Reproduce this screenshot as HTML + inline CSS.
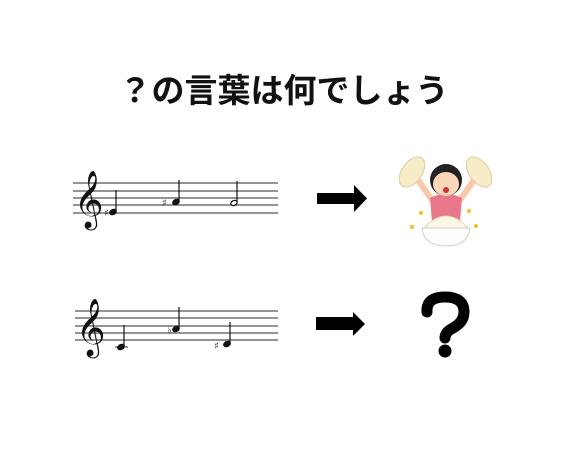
<!DOCTYPE html>
<html><head><meta charset="utf-8"><style>
html,body{margin:0;padding:0;background:#fff;width:567px;height:473px;overflow:hidden}
.t{position:absolute;left:0;top:64px;width:567px;text-align:center;font:bold 33px "Liberation Sans","Noto Sans CJK JP",sans-serif;letter-spacing:0px;color:#111}
svg{position:absolute;left:0;top:0}
</style></head><body>
<div class="t">？の言葉は何でしょう</div>
<svg width="567" height="473" viewBox="0 0 567 473">
<g stroke="#555" stroke-width="1.2">
<line x1="73" y1="183" x2="278" y2="183"/><line x1="73" y1="191" x2="278" y2="191"/><line x1="73" y1="198" x2="278" y2="198"/><line x1="73" y1="205" x2="278" y2="205"/><line x1="73" y1="213" x2="278" y2="213"/>
<line x1="75" y1="311" x2="278" y2="311"/><line x1="75" y1="318" x2="278" y2="318"/><line x1="75" y1="326" x2="278" y2="326"/><line x1="75" y1="333" x2="278" y2="333"/><line x1="75" y1="340" x2="278" y2="340"/>
<line x1="115" y1="347" x2="128" y2="347"/>
</g>
<g font-family="DejaVu Sans,sans-serif" fill="#111">
<text x="74" y="216" font-size="50">𝄞</text>
<text x="76" y="344" font-size="50">𝄞</text>
</g>
<g fill="#111" stroke="#111">
<ellipse cx="113" cy="212" rx="3.5" ry="2.6" transform="rotate(-25 113 212)"/><line x1="116" y1="211" x2="116" y2="190" stroke-width="1.2"/>
<ellipse cx="176" cy="202" rx="3.5" ry="2.6" transform="rotate(-25 176 202)"/><line x1="179" y1="201" x2="179" y2="180" stroke-width="1.2"/>
<ellipse cx="234" cy="203" rx="3.3" ry="2.4" transform="rotate(-25 234 203)" fill="#fff" stroke-width="1.2"/><line x1="237" y1="202" x2="237" y2="181" stroke-width="1.2"/>
<ellipse cx="121" cy="347" rx="3.5" ry="2.6" transform="rotate(-25 121 347)"/><line x1="124" y1="346" x2="124" y2="325" stroke-width="1.2"/>
<ellipse cx="176" cy="329" rx="3.5" ry="2.6" transform="rotate(-25 176 329)"/><line x1="179" y1="328" x2="179" y2="307" stroke-width="1.2"/>
<ellipse cx="227" cy="344" rx="3.5" ry="2.6" transform="rotate(-25 227 344)"/><line x1="230" y1="343" x2="230" y2="322" stroke-width="1.2"/>
</g>
<g font-family="DejaVu Sans,sans-serif" font-size="10" fill="#333">
<text x="104" y="216">♯</text><text x="162" y="206">♯</text><text x="167" y="333">♭</text><text x="214" y="349">♯</text>
</g>
<path d="M317 193H354V185L367 198.5L354 212V204H317Z" fill="#000"/>
<path d="M316 317H353V312L365 324L353 336V330H316Z" fill="#000"/>
<path d="M427 312Q426 297 445 297Q464 297 464 312Q464 322 453 328Q445 332 445 338" fill="none" stroke="#000" stroke-width="11" stroke-linecap="round"/>
<circle cx="445" cy="351" r="6.5" fill="#000"/>
<!-- girl -->
<g>
<ellipse cx="412" cy="172" rx="10" ry="17" transform="rotate(35 412 172)" fill="#f6edc8" stroke="#d9cfa0"/>
<ellipse cx="479" cy="172" rx="10" ry="17" transform="rotate(-35 479 172)" fill="#f6edc8" stroke="#d9cfa0"/>
<path d="M418 180L432 200" stroke="#f8c8a8" stroke-width="6"/>
<path d="M474 180L460 200" stroke="#f8c8a8" stroke-width="6"/>
<path d="M430 198Q446 190 462 198L460 222H432Z" fill="#e9788a"/>
<circle cx="446" cy="180" r="16" fill="#222"/>
<ellipse cx="446" cy="184" rx="13" ry="12" fill="#fbd6b8"/>
<path d="M432 172Q446 160 460 172Q446 168 432 176Z" fill="#222"/>
<ellipse cx="446" cy="190" rx="3" ry="3" fill="#c33"/>
<path d="M424 228Q446 204 468 228Z" fill="#fbf7e4" stroke="#ddd6b0"/>
<path d="M422 228H470Q468 246 446 246Q424 246 422 228Z" fill="#fff" stroke="#ccc"/>
<g fill="#f0c020"><circle cx="421" cy="213" r="2"/><circle cx="469" cy="211" r="2"/><circle cx="412" cy="227" r="2"/><circle cx="476" cy="226" r="2"/></g>
</g>
</svg>
</body></html>
